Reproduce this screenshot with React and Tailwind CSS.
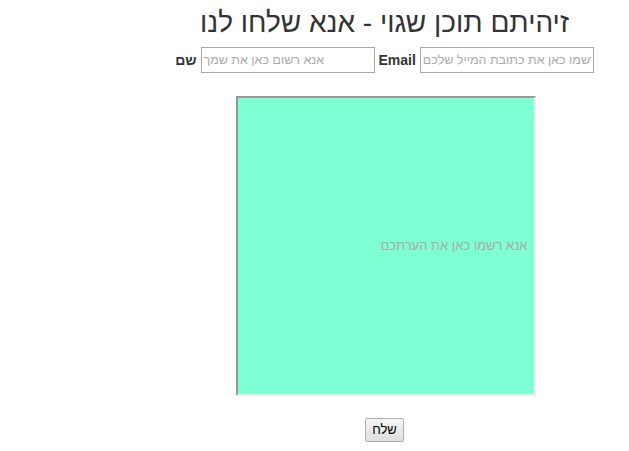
export default function App() {
  return (
    <div className="min-h-[451px] bg-white font-['Liberation_Sans',Arial,sans-serif] text-[#333]">
      <div className="flex flex-col items-center pl-[140px]">
        <h1 dir="rtl" className="mt-[6px] text-[28px] leading-[34px] font-normal">
          זיהיתם תוכן שגוי - אנא שלחו לנו
        </h1>
        <div className="mt-[7px] flex items-center gap-[4px] text-[14px]">
          <label className="font-bold">שם</label>
          <input
            placeholder="אנא רשום כאן את שמך"
            className="h-[26px] w-[174px] border border-[#a9a9a9] px-[2px] text-[12.5px] placeholder:text-[#a9a9a9] outline-none"
          />
          <label className="font-bold">Email</label>
          <input
            placeholder="רשמו כאן את כתובת המייל שלכם"
            className="h-[26px] w-[174px] border border-[#a9a9a9] px-[2px] text-[12.5px] placeholder:text-[#a9a9a9] outline-none"
          />
        </div>
        <textarea
          dir="rtl"
          placeholder="אנא רשמו כאן את הערתכם"
          className="mt-[23px] ml-[2px] h-[300px] w-[300px] resize-none border-2 border-t-[#999] border-l-[#999] border-b-[#eee] border-r-[#eee] bg-[#7fffd4] px-[6px] pt-[138px] text-[13px] placeholder:text-[#a9a9a9] outline-none"
        />
        <button className="mt-[22px] h-[24px] rounded-[2px] border border-[#adadad] bg-gradient-to-b from-[#f6f6f6] to-[#dedede] px-[6px] text-[13px] text-black">
          שלח
        </button>
      </div>
    </div>
  )
}
